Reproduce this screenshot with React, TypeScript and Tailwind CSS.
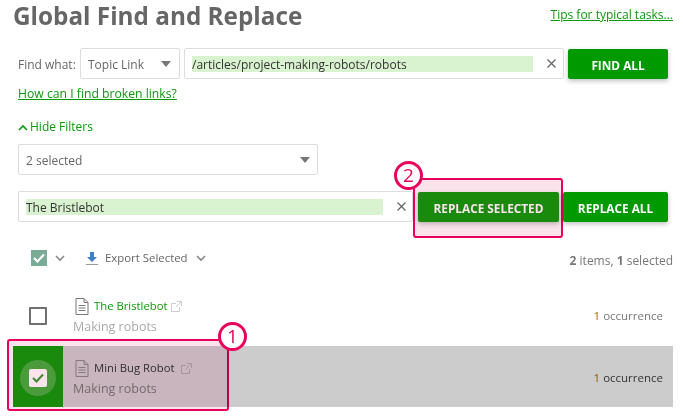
import React from "react";

const font = { fontFamily: '"Open Sans", "Noto Sans", sans-serif' };

function Caret() {
  return <span className="h-0 w-0 border-x-[5px] border-t-[6px] border-x-transparent border-t-[#777]" />;
}

function Clear() {
  return (
    <svg width="9" height="9" viewBox="0 0 9 9" className="shrink-0">
      <path d="M.5.5l8 8M8.500.5l-8 8" stroke="#666" strokeWidth="1.300" fill="none" />
    </svg>
  );
}

function Chevron({ color = "#888" }: { color?: string }) {
  return (
    <svg width="10" height="7" viewBox="0 0 10 7">
      <path d="M1 1l4 4 4-4" stroke={color} strokeWidth="1.600" fill="none" />
    </svg>
  );
}

function Doc({ color = "#777" }: { color?: string }) {
  return (
    <svg width="14" height="17" viewBox="0 0 14 17" className="shrink-0">
      <path d="M1 .5h8l4 4v12H1zM9 .5v4h4M3.500 7.500h7M3.500 10h7M3.500 12.500h7" stroke={color} strokeWidth="1" fill="none" />
    </svg>
  );
}

function Ext({ color = "#ccc" }: { color?: string }) {
  return (
    <svg width="11" height="11" viewBox="0 0 11 11" className="shrink-0">
      <path d="M8.500 6v4.500h-8v-8H5M6 .5h4.500V5M10.500.5L5 6" stroke={color} strokeWidth="1" fill="none" />
    </svg>
  );
}

function Badge({ n, className }: { n: string; className: string }) {
  return (
    <div className={`absolute flex h-[29px] w-[29px] items-center justify-center rounded-full border-[3px] border-[#e8005c] bg-white text-[19px] leading-none text-[#e8005c] ${className}`}>
      {n}
    </div>
  );
}

function GreenButton({ label, className }: { label: string; className: string }) {
  return (
    <button className={`flex h-[30px] shrink-0 items-center justify-center rounded-[2px] pt-[3px] text-[11.800px] leading-[18px] font-bold text-white shadow-[0_2px_5px_rgba(0,0,0,0.25)] ${className}`}>
      {label}
    </button>
  );
}

export default function App() {
  return (
    <div className="relative h-[418px] w-[683px] overflow-hidden bg-white text-[12px] text-[#666]" style={font}>
      <header className="flex h-[48px] items-start justify-between pl-[13px] pr-[10px]">
        <h1 className="text-[24.300px] leading-[31px] font-bold whitespace-nowrap text-[#666]">Global Find and Replace</h1>
        <a className="mt-[6px] text-[12px] leading-[18px] text-[#0a9a0a] underline">Tips for typical tasks...</a>
      </header>

      <div className="flex h-[31px] items-center pl-[18px]">
        <span className="w-[62px] pt-[2px]">Find what:</span>
        <div className="flex h-[31px] w-[100px] items-center justify-between rounded-[2px] border border-[#ddd] pl-[7px] pr-[8px]">
          <span className="pt-[2px]">Topic Link</span>
          <Caret />
        </div>
        <div className="ml-[4px] flex h-[31px] w-[380px] items-center rounded-[2px] border border-[#ddd] pl-[7px]">
          <span className="h-[16px] w-[341px] bg-[#d9f2cf] text-[12px] leading-[17px] text-[#333]">/articles/project-making-robots/robots</span>
          <span className="ml-[14px] flex"><Clear /></span>
        </div>
        <GreenButton label="FIND ALL" className="ml-[4px] w-[100px] bg-[#009900]" />
      </div>

      <div className="mt-[6px] pl-[18px]">
        <a className="text-[12.200px] leading-[18px] text-[#0a9a0a] underline">How can I find broken links?</a>
      </div>

      <div className="mt-[15px] flex h-[18px] items-center gap-[2px] pl-[18px] text-[#0a9a0a]">
        <span className="rotate-180"><Chevron color="#0a9a0a" /></span>
        <span>Hide Filters</span>
      </div>

      <div className="ml-[18px] mt-[8px] flex h-[31px] w-[300px] items-center justify-between rounded-[2px] border border-[#ddd] pl-[7px] pr-[7px]">
        <span className="pt-[2px]">2 selected</span>
        <Caret />
      </div>

      <div className="mt-[16px] flex h-[31px] items-center pl-[18px]">
        <div className="flex h-[31px] w-[395px] items-center rounded-[2px] border border-[#ddd] pl-[7px]">
          <span className="h-[16px] w-[357px] bg-[#d9f2cf] text-[12px] leading-[17px] text-[#333]">The Bristlebot</span>
          <span className="ml-[14px] flex"><Clear /></span>
        </div>
        <GreenButton label="REPLACE SELECTED" className="ml-[5px] w-[141px] bg-[#1a9b0d]" />
        <GreenButton label="REPLACE ALL" className="ml-[4px] w-[105px] bg-[#009900]" />
      </div>

      <div className="mt-[28px] flex h-[16px] items-center pl-[31px] pr-[10px]">
        <span className="flex h-[16px] w-[16px] items-center justify-center bg-[#7aab96]">
          <svg width="12" height="10" viewBox="0 0 12 10"><path d="M1 5l3.500 3.500L11 1.500" stroke="#fff" strokeWidth="2.200" fill="none" /></svg>
        </span>
        <span className="ml-[8px] flex"><Chevron /></span>
        <svg width="12" height="13" viewBox="0 0 12 13" className="ml-[21px]">
          <path d="M4 0h4v5h3L6 10 1 5h3z" fill="#3d7fc0" />
          <path d="M0 12.500h12" stroke="#999" strokeWidth="1" />
        </svg>
        <span className="ml-[7px] text-[11.400px]">Export Selected</span>
        <span className="ml-[8px] flex"><Chevron /></span>
        <span className="ml-auto mt-[6px] text-[12px] text-[#777]"><b>2</b> items, <b>1</b> selected</span>
      </div>

      <div className="mt-[19px] flex h-[60px] items-center pl-[29px] pr-[20px] pt-[2px]">
        <span className="h-[18px] w-[18px] rounded-[1px] border-2 border-[#707070]" />
        <div className="ml-[26px] w-[200px]">
          <div className="flex h-[20px] items-center pl-[2px]">
            <Doc />
            <span className="ml-[5px] text-[11.300px] text-[#0a9a0a]">The Bristlebot</span>
            <span className="ml-[3px]"><Ext /></span>
          </div>
          <div className="mt-[1px] text-[12.500px] leading-[18px] text-[#aaa]">Making robots</div>
        </div>
        <span className="ml-auto text-[11.500px] text-[#777]"><span className="text-[#a86a00]">1</span> occurrence</span>
      </div>

      <div className="ml-[13px] mr-[10px] mt-[1px] flex h-[61px] items-center bg-[#cccccc] pr-[10px]">
        <div className="flex h-full w-[50px] items-center justify-center bg-[#1a9b0d] pt-[3px]">
          <div className="flex h-[36px] w-[36px] items-center justify-center rounded-full bg-[#4cae42]">
            <span className="flex h-[18px] w-[18px] items-center justify-center rounded-[2px] bg-white">
              <svg width="12" height="10" viewBox="0 0 12 10"><path d="M1 5l3.500 3.500L11 1.500" stroke="#3d9a35" strokeWidth="2" fill="none" /></svg>
            </span>
          </div>
        </div>
        <div className="ml-[10px] w-[200px] pt-[3px]">
          <div className="flex h-[20px] items-center pl-[2px]">
            <Doc color="#888" />
            <span className="ml-[5px] text-[11.300px] text-[#333]">Mini Bug Robot</span>
            <span className="ml-[6px]"><Ext color="#aaa" /></span>
          </div>
          <div className="mt-[1px] text-[12.500px] leading-[18px] text-[#777]">Making robots</div>
        </div>
        <span className="ml-auto pt-[2px] text-[11.500px] text-[#333]"><span className="text-[#8a5a00]">1</span> occurrence</span>
      </div>

      <div className="absolute left-[7px] top-[339px] h-[72px] w-[222px] rounded-[3px] border-2 border-[#e8005c] bg-[#fbe3ec] mix-blend-multiply" />
      <div className="absolute left-[413px] top-[178px] h-[60px] w-[150px] rounded-[3px] border-2 border-[#e8005c] bg-[#fbe3ec] mix-blend-multiply" />
      <Badge n="1" className="left-[218px] top-[322px]" />
      <Badge n="2" className="left-[394px] top-[161px]" />
    </div>
  );
}
